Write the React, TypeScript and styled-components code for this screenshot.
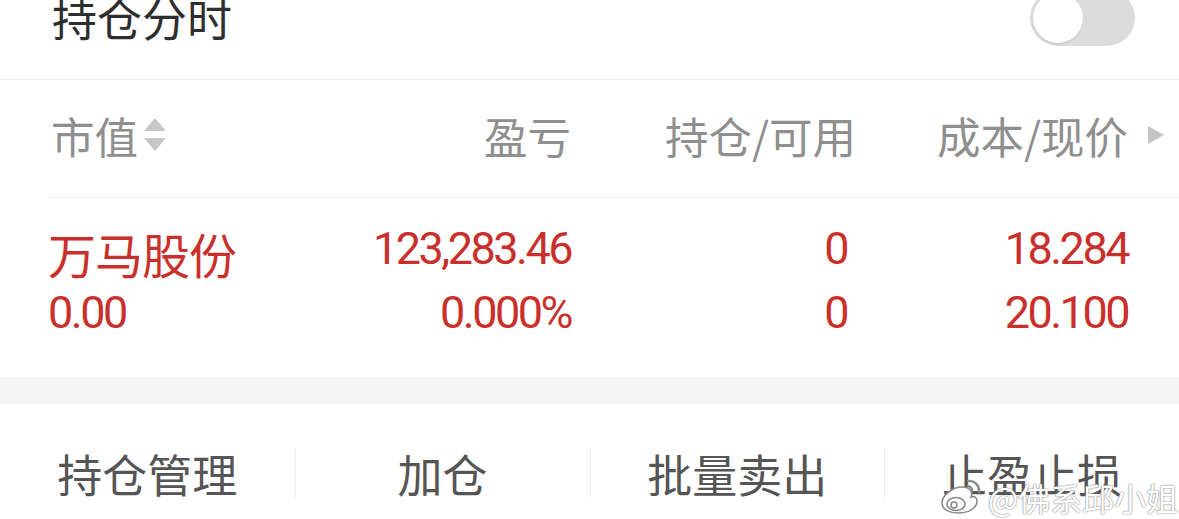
import React from "react";
import styled, { createGlobalStyle } from "styled-components";

const CJK = `"Noto Sans CJK SC", "Noto Sans", sans-serif`;
const NUM = `Roboto, "Noto Sans CJK SC", sans-serif`;
const RED = "#c9302c";

const GlobalStyle = createGlobalStyle`
  html, body {
    margin: 0;
    padding: 0;
    background: #ffffff;
    overflow: hidden;
  }
  * { box-sizing: border-box; }
`;

const Page = styled.div`
  position: relative;
  width: 1179px;
  height: 519px;
  background: #ffffff;
  font-family: ${CJK};
  overflow: hidden;
`;

const TitleBar = styled.div`
  height: 80px;
  padding: 0 44px 44px 52px;
  display: flex;
  align-items: center;
  justify-content: space-between;
  border-bottom: 1px solid #ececec;
`;

const Title = styled.div`
  font-size: 45px;
  line-height: 36px;
  color: #2e2e2e;
`;

const Track = styled.div`
  width: 105px;
  height: 56px;
  border-radius: 28px;
  background: #dcdcdc;
  padding: 3px;
  display: flex;
  align-items: center;
`;

const Knob = styled.div`
  width: 50px;
  height: 50px;
  border-radius: 50%;
  background: #ffffff;
  box-shadow: 0 1px 2px rgba(0, 0, 0, 0.12);
`;

const Grid = styled.div<{ $h: number }>`
  display: grid;
  grid-template-columns: 263px 260px 285px 272px 1fr;
  align-items: center;
  padding-left: 48px;
  height: ${(p) => p.$h}px;
`;

const HeaderRow = styled(Grid)`
  position: relative;
  padding-bottom: 8px;
  &::after {
    content: "";
    position: absolute;
    left: 48px;
    right: 0;
    bottom: 0;
    height: 1px;
    background: #ececec;
  }
`;

const HeadCell = styled.div<{ $right?: boolean }>`
  display: flex;
  align-items: center;
  justify-content: ${(p) => (p.$right ? "flex-end" : "flex-start")};
  gap: 6px;
  padding-left: ${(p) => (p.$right ? "0" : "3px")};
  font-size: 43.5px;
  color: #8f8f8f;
  white-space: nowrap;
`;

const ArrowCell = styled.div`
  display: flex;
  align-items: center;
  padding-left: 20px;
`;

const DataBlock = styled.div`
  height: 179px;
  padding-top: 19px;
`;

const Cell = styled.div<{ $right?: boolean; $cjk?: boolean; $pr?: number }>`
  height: 64px;
  line-height: 64px;
  text-align: ${(p) => (p.$right ? "right" : "left")};
  font-family: ${(p) => (p.$cjk ? CJK : NUM)};
  font-size: ${(p) => (p.$cjk ? "48px" : "45px")};
  letter-spacing: ${(p) => (p.$cjk ? "-1px" : "-2.5px")};
  padding-top: ${(p) => (p.$cjk ? "4px" : "0")};
  padding-right: ${(p) => p.$pr ?? 0}px;
  color: ${RED};
  white-space: nowrap;
`;

const Band = styled.div`
  height: 27px;
  background: #f5f5f5;
`;

const Actions = styled.div`
  height: 114px;
  display: grid;
  grid-template-columns: repeat(4, 1fr);
  align-items: center;
  padding-top: 24px;
`;

const Action = styled.div<{ $sep?: boolean }>`
  height: 50px;
  display: flex;
  align-items: center;
  justify-content: center;
  font-size: 45px;
  color: #555555;
  border-left: ${(p) => (p.$sep ? "1px solid #ececec" : "none")};
`;

const Watermark = styled.div`
  position: absolute;
  left: 940px;
  top: 474px;
  display: flex;
  align-items: center;
  gap: 2px;
`;

const MarkText = styled.span`
  font-family: ${CJK};
  font-size: 32px;
  color: #ffffff;
  text-shadow: 0 0 2px #8a8a8a, 0 0 1px #8a8a8a;
`;

const SortIcon = () => (
  <svg width="22" height="34" viewBox="0 0 22 34">
    <polygon points="11,0 22,13 0,13" fill="#c8c8c8" />
    <polygon points="0,20 22,20 11,33" fill="#c8c8c8" />
  </svg>
);

const RightTri = () => (
  <svg width="16" height="18" viewBox="0 0 16 18">
    <polygon points="0,0 16,9 0,18" fill="#c4c4c4" />
  </svg>
);

const WeiboLogo = () => (
  <svg width="46" height="36" viewBox="0 0 46 36">
    <g fill="#ffffff" stroke="#8a8a8a" strokeWidth="1.6">
      <path d="M22 8C13 8 2 16 2 24c0 7 8 10 16 10 11 0 19-5 19-12 0-4-3-5-6-4 2-4 0-10-9-10z" />
      <ellipse cx="16" cy="25" rx="9" ry="6.5" />
      <circle cx="14" cy="26" r="3" />
      <path d="M27 2c7-1 13 4 12 12" fill="none" strokeWidth="2.4" />
      <path d="M27 7c3 0 6 2 5 6" fill="none" strokeWidth="2.4" />
    </g>
  </svg>
);

const second = ["0.00", "0.000%", "0", "20.100"];

export default function App() {
  return (
    <Page>
      <GlobalStyle />
      <TitleBar>
        <Title>持仓分时</Title>
        <Track>
          <Knob />
        </Track>
      </TitleBar>

      <HeaderRow $h={118}>
        <HeadCell>
          市值
          <SortIcon />
        </HeadCell>
        <HeadCell $right>盈亏</HeadCell>
        <HeadCell $right>持仓/可用</HeadCell>
        <HeadCell $right>成本/现价</HeadCell>
        <ArrowCell>
          <RightTri />
        </ArrowCell>
      </HeaderRow>

      <DataBlock>
        <Grid $h={64}>
          <Cell $cjk>万马股份</Cell>
          <Cell $right>123,283.46</Cell>
          <Cell $right $pr={9}>0</Cell>
          <Cell $right>18.284</Cell>
        </Grid>
        <Grid $h={64}>
          <Cell>{second[0]}</Cell>
          <Cell $right>{second[1]}</Cell>
          <Cell $right $pr={9}>{second[2]}</Cell>
          <Cell $right>{second[3]}</Cell>
        </Grid>
      </DataBlock>

      <Band />

      <Actions>
        <Action>持仓管理</Action>
        <Action $sep>加仓</Action>
        <Action $sep>批量卖出</Action>
        <Action $sep>止盈止损</Action>
      </Actions>

      <Watermark>
        <WeiboLogo />
        <MarkText>@佛系邱小姐</MarkText>
      </Watermark>
    </Page>
  );
}
